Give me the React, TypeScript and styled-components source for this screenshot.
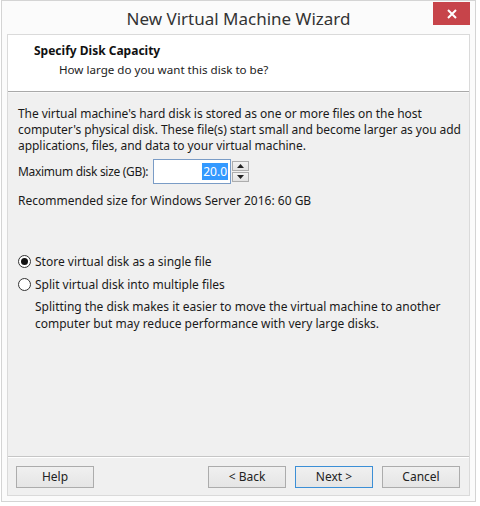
import React from "react";
import styled, { createGlobalStyle } from "styled-components";

const Global = createGlobalStyle`
  html, body { margin: 0; padding: 0; background: #ffffff; }
  body { font-family: "Noto Sans", "Open Sans", sans-serif; }
`;

const Window = styled.div`
  box-sizing: border-box;
  width: 475px;
  height: 502px;
  margin-left: 1px;
  border: 1px solid #d4d4d4;
  background: #fbfbfb;
  display: flex;
  flex-direction: column;
`;

const TitleBar = styled.div`
  position: relative;
  height: 33px;
  display: flex;
  align-items: center;
  justify-content: center;
`;

const Title = styled.div`
  font-family: "Noto Sans", sans-serif;
  font-size: 17px;
  color: #333;
  margin-top: 1px;
`;

const CloseButton = styled.div`
  position: absolute;
  right: 5px;
  top: 1px;
  width: 37px;
  height: 23px;
  background: #c7444a;
  display: flex;
  align-items: center;
  justify-content: center;
`;

const Frame = styled.div`
  flex: 1;
  margin: 0 5px 5px 5px;
  border: 1px solid #dadada;
  background: #f0f0f0;
  display: flex;
  flex-direction: column;
`;

const Header = styled.div`
  background: #ffffff;
  height: 57px;
  border-bottom: 1px solid #a9a9a9;
  box-shadow: 0 1px 0 #f8f8f8;
  padding: 8px 0 0 26px;
  box-sizing: border-box;
`;

const HeaderTitle = styled.div`
  font-size: 12px;
  font-weight: 700;
  color: #111;
  line-height: 16px;
`;

const HeaderSub = styled.div`
  font-size: 11.6px;
  color: #222;
  line-height: 16px;
  margin-top: 3px;
  padding-left: 25px;
`;

const Body = styled.div`
  flex: 1;
  padding: 14px 10px 0 10px;
  font-size: 12px;
  color: #1a1a1a;
  white-space: nowrap;
`;

const Para = styled.p`
  margin: 0;
  line-height: 16px;
  letter-spacing: -0.05px;
`;

const SizeRow = styled.div`
  display: flex;
  align-items: center;
  margin-top: 5px;
  height: 25px;
`;

const Label = styled.span`
  width: 135px;
  flex-shrink: 0;
  letter-spacing: -0.3px;
`;

const Input = styled.div`
  box-sizing: border-box;
  width: 78px;
  height: 25px;
  border: 1px solid #7a9cc6;
  background: #fff;
  display: flex;
  align-items: center;
  justify-content: flex-end;
  padding-right: 2px;
`;

const Selected = styled.span`
  background: #3399ff;
  color: #fff;
  line-height: 17px;
  padding: 0 1px;
`;

const Spinner = styled.div`
  display: flex;
  flex-direction: column;
  margin-left: 1px;
  gap: 1px;
`;

const SpinBtn = styled.div`
  box-sizing: border-box;
  width: 17px;
  height: 10px;
  border: 1px solid #adadad;
  background: linear-gradient(#f2f2f2, #e2e2e2);
  display: flex;
  align-items: center;
  justify-content: center;
`;

const Recommend = styled.div`
  margin-top: 9px;
  line-height: 15px;
`;

const Options = styled.div`
  margin-top: 46px;
  display: flex;
  flex-direction: column;
  gap: 8px;
`;

const RadioRow = styled.label`
  display: flex;
  align-items: center;
  gap: 4px;
  line-height: 15px;
`;

const RadioCircle = styled.span<{ $checked?: boolean }>`
  box-sizing: border-box;
  width: 13px;
  height: 13px;
  border-radius: 50%;
  border: 1px solid #333;
  background: #fff;
  display: flex;
  align-items: center;
  justify-content: center;
  &::after {
    content: "";
    display: ${(p) => (p.$checked ? "block" : "none")};
    width: 7px;
    height: 7px;
    border-radius: 50%;
    background: #111;
  }
`;

const Note = styled.p`
  margin: 6px 0 0 17px;
  line-height: 17px;
`;

const Footer = styled.div`
  height: 38px;
  border-top: 1px solid #c6c6c6;
  box-shadow: inset 0 1px 0 #ffffff;
  display: flex;
  align-items: center;
  padding: 0 9px 0 8px;
  gap: 9px;
`;

const Spacer = styled.div`
  flex: 1;
`;

const Button = styled.button<{ $default?: boolean }>`
  box-sizing: border-box;
  width: 78px;
  height: 22px;
  border: 1px solid ${(p) => (p.$default ? "#3c8fd6" : "#acacac")};
  background: linear-gradient(#f0f0f0, #e5e5e5);
  font-family: "Noto Sans", sans-serif;
  font-size: 12px;
  color: #222;
  padding: 0;
  margin-top: 1px;
`;

export default function App() {
  return (
    <>
      <Global />
      <Window>
        <TitleBar>
          <Title>New Virtual Machine Wizard</Title>
          <CloseButton>
            <svg width="10" height="10" viewBox="0 0 10 10">
              <path d="M1 1 L9 9 M9 1 L1 9" stroke="#fff" strokeWidth="2" />
            </svg>
          </CloseButton>
        </TitleBar>
        <Frame>
          <Header>
            <HeaderTitle>Specify Disk Capacity</HeaderTitle>
            <HeaderSub>How large do you want this disk to be?</HeaderSub>
          </Header>
          <Body>
            <Para>
              The virtual machine's hard disk is stored as one or more files on the host
              <br />
              computer's physical disk. These file(s) start small and become larger as you add
              <br />
              applications, files, and data to your virtual machine.
            </Para>
            <SizeRow>
              <Label>Maximum disk size (GB):</Label>
              <Input>
                <Selected>20.0</Selected>
              </Input>
              <Spinner>
                <SpinBtn>
                  <svg width="7" height="4" viewBox="0 0 7 4">
                    <path d="M0 4 L3.5 0 L7 4 Z" fill="#222" />
                  </svg>
                </SpinBtn>
                <SpinBtn>
                  <svg width="7" height="4" viewBox="0 0 7 4">
                    <path d="M0 0 L3.5 4 L7 0 Z" fill="#222" />
                  </svg>
                </SpinBtn>
              </Spinner>
            </SizeRow>
            <Recommend>Recommended size for Windows Server 2016: 60 GB</Recommend>
            <Options>
              <RadioRow>
                <RadioCircle $checked />
                Store virtual disk as a single file
              </RadioRow>
              <div>
                <RadioRow>
                  <RadioCircle />
                  Split virtual disk into multiple files
                </RadioRow>
                <Note>
                  Splitting the disk makes it easier to move the virtual machine to another
                  <br />
                  computer but may reduce performance with very large disks.
                </Note>
              </div>
            </Options>
          </Body>
          <Footer>
            <Button>Help</Button>
            <Spacer />
            <Button>&lt; Back</Button>
            <Button $default>Next &gt;</Button>
            <Button>Cancel</Button>
          </Footer>
        </Frame>
      </Window>
    </>
  );
}
